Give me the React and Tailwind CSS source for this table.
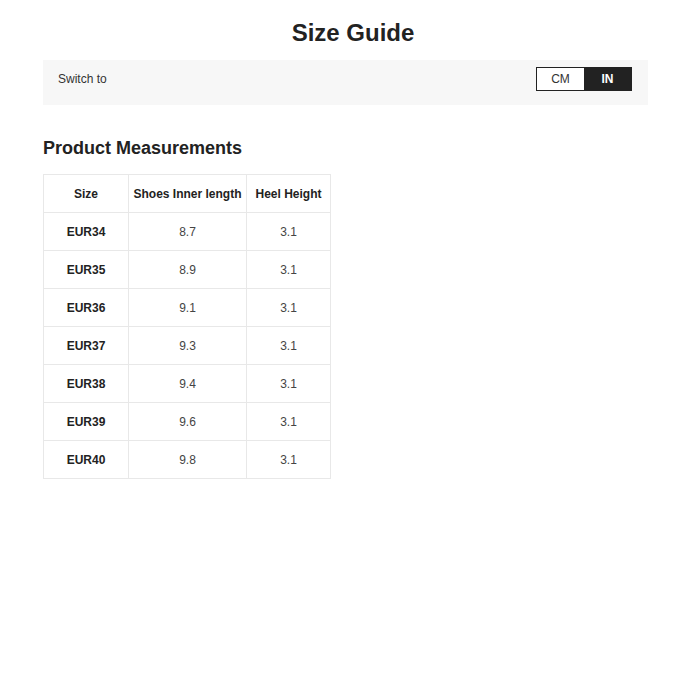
export default function App() {
  const rows = [
    ["EUR34", "8.7", "3.1"],
    ["EUR35", "8.9", "3.1"],
    ["EUR36", "9.1", "3.1"],
    ["EUR37", "9.3", "3.1"],
    ["EUR38", "9.4", "3.1"],
    ["EUR39", "9.6", "3.1"],
    ["EUR40", "9.8", "3.1"],
  ];
  return (
    <div className="w-[674px] h-[700px] bg-white text-[#222]" style={{ fontFamily: '"Liberation Sans", Arial, sans-serif' }}>
      <div className="pt-[17px] pl-[32px] text-center text-[24px] leading-[32px] font-bold text-[#222]">Size Guide</div>
      <div className="ml-[43px] mt-[11px] w-[605px] h-[45px] bg-[#f7f7f7] flex items-start justify-between pl-[15px] pr-[16px]">
        <div className="pt-[11px] text-[12px] leading-[16px] text-[#333]">Switch to</div>
        <div className="mt-[7px] flex border border-[#222] h-[24px]">
          <div className="w-[47px] flex items-center justify-center text-[12px] bg-white text-[#333]">CM</div>
          <div className="w-[47px] flex items-center justify-center text-[12px] font-bold bg-[#222] text-white">IN</div>
        </div>
      </div>
      <div className="ml-[43px] mt-[31px] text-[18px] leading-[24px] font-bold text-[#222]">Product Measurements</div>
      <table className="ml-[43px] mt-[14px] border-collapse text-[12px]">
        <thead>
          <tr className="h-[38px]">
            <th className="w-[85px] border border-[#e8e8e8] font-bold text-[#222] p-0">Size</th>
            <th className="w-[118px] border border-[#e8e8e8] font-bold text-[#222] p-0">Shoes Inner length</th>
            <th className="w-[84px] border border-[#e8e8e8] font-bold text-[#222] p-0">Heel Height</th>
          </tr>
        </thead>
        <tbody>
          {rows.map((r) => (
            <tr key={r[0]} className="h-[38px]">
              <td className="border border-[#e8e8e8] text-center font-bold text-[#222] p-0">{r[0]}</td>
              <td className="border border-[#e8e8e8] text-center text-[#444] p-0">{r[1]}</td>
              <td className="border border-[#e8e8e8] text-center text-[#444] p-0">{r[2]}</td>
            </tr>
          ))}
        </tbody>
      </table>
    </div>
  );
}
